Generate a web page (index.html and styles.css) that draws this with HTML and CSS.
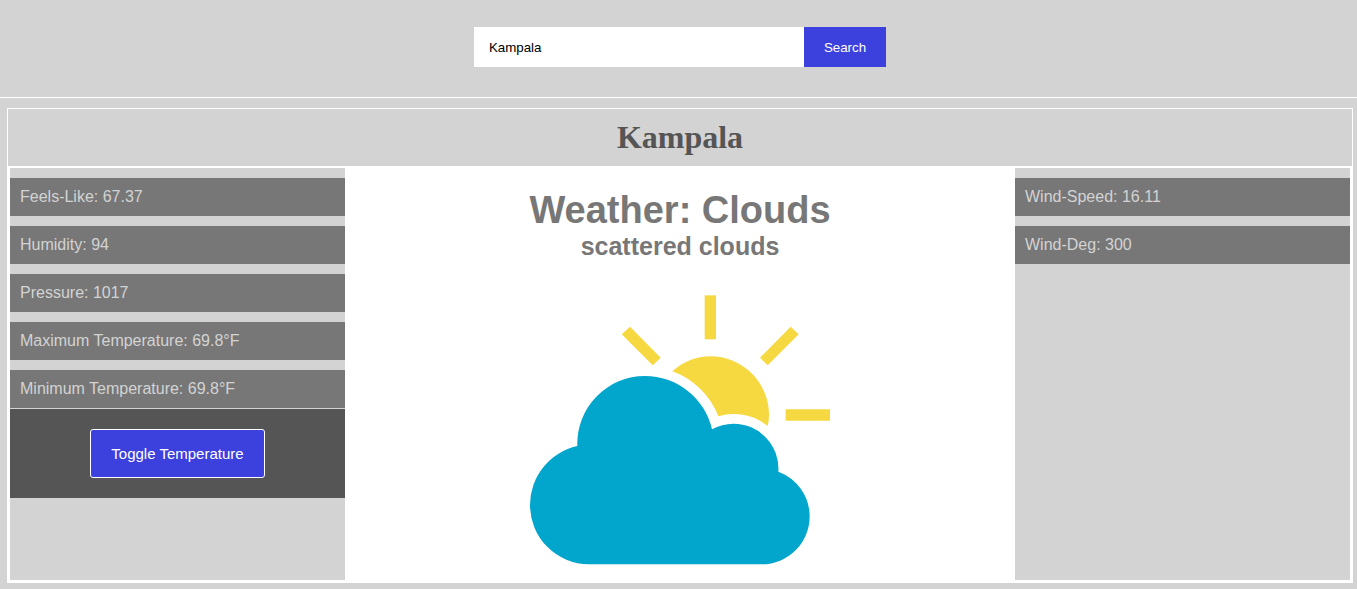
FILE: index.html
```html
<!DOCTYPE html>
<html lang="en">
<head>
  <meta charset="utf-8">
  <meta name="viewport" content="width=device-width, initial-scale=1">
  <title>Weather</title>
  <link rel="stylesheet" href="styles.css">
</head>
<body>
  <header class="topbar">
    <form class="search">
      <input class="search-input" type="text" aria-label="City" value="Kampala">
      <button class="search-button" type="button">Search</button>
    </form>
  </header>
  <main class="card">
    <h1 class="city">Kampala</h1>
    <div class="details">
      <section class="side">
        <ul class="facts">
          <li class="fact">Feels-Like: 67.37</li>
          <li class="fact">Humidity: 94</li>
          <li class="fact">Pressure: 1017</li>
          <li class="fact">Maximum Temperature: 69.8°F</li>
          <li class="fact">Minimum Temperature: 69.8°F</li>
        </ul>
        <div class="toggle">
          <button class="toggle-button" type="button">Toggle Temperature</button>
        </div>
      </section>
      <section class="summary">
        <h2 class="weather">Weather: Clouds</h2>
        <h3 class="description">scattered clouds</h3>
        <svg class="icon" viewBox="30 -15 900 900" role="img" aria-label="Sun behind a cloud">
          <g fill="#f6d940">
            <path d="M554 31H588V163H554Z"/>
            <path d="M797 373H930V407H797Z"/>
            <path d="M330 125L422 218L398 241L305 148Z"/>
            <path d="M812 125L836 148L743 241L720 218Z"/>
            <path d="M457 259A176 176 0 0 1 571 214A176 176 0 0 1 747 390Q747 407 743 423A163 163 0 0 0 595 394A234 234 0 0 0 457 259Z"/>
          </g>
          <path fill="#02a5cc" d="M207 838A178 178 0 0 1 30 660A181 181 0 0 1 172 483A203 203 0 0 1 375 273A206 206 0 0 1 576 433A134 134 0 0 1 640 416A135 135 0 0 1 775 560A144 144 0 0 1 869 694A144 144 0 0 1 725 838Z"/>
        </svg>
      </section>
      <section class="side">
        <ul class="facts">
          <li class="fact">Wind-Speed: 16.11</li>
          <li class="fact">Wind-Deg: 300</li>
        </ul>
      </section>
    </div>
  </main>
</body>
</html>
```
FILE: styles.css
```css
* {
  box-sizing: border-box;
  margin: 0;
  padding: 0;
}

body {
  background: #d3d3d3;
  font-family: "Liberation Sans", Arial, sans-serif;
  font-size: 16px;
}

.topbar {
  padding: 27px 0 30px 3px;
  border-bottom: 1px solid #fff;
}

.search {
  display: flex;
  justify-content: center;
}

.search-input,
.search-button {
  height: 40px;
  border: 0;
  font-family: inherit;
}

.search-input {
  width: 330px;
  padding: 0 15px;
  background: #fff;
  color: #000;
}

.search-button {
  padding: 0 20px;
  background: #3c40dd;
  color: #fff;
}

.card {
  margin: 10px 4px 6px 7px;
  border: 1px solid #fff;
}

.city {
  padding: 10px;
  color: #555;
  font-family: "Liberation Serif", "Times New Roman", serif;
  font-size: 32px;
  line-height: 37px;
  text-align: center;
}

.details {
  display: grid;
  grid-template-columns: 1fr 2fr 1fr;
  padding: 2px;
  background: #fff;
}

.side {
  padding-top: 10px;
  background: #d3d3d3;
}

.facts {
  display: grid;
  gap: 10px;
  list-style: none;
}

.fact {
  padding: 10px;
  background: #777;
  color: #d3d3d3;
  line-height: 18px;
}

.toggle {
  margin-top: 1px;
  padding: 20px;
  background: #555;
  text-align: center;
}

.toggle-button {
  display: block;
  margin: 0 auto;
  padding: 15px 20px;
  border: 1px solid #fff;
  border-radius: 3px;
  background: #3c40dd;
  color: #fff;
  font-family: inherit;
  font-size: 15px;
  line-height: 17px;
}

.summary {
  padding-top: 20px;
  color: #777;
  text-align: center;
}

.weather {
  font-size: 38px;
  line-height: 44px;
}

.description {
  font-size: 25px;
  line-height: 28px;
}

.icon {
  display: block;
  width: 300px;
  height: 300px;
  margin: 20px auto 0;
}
```
